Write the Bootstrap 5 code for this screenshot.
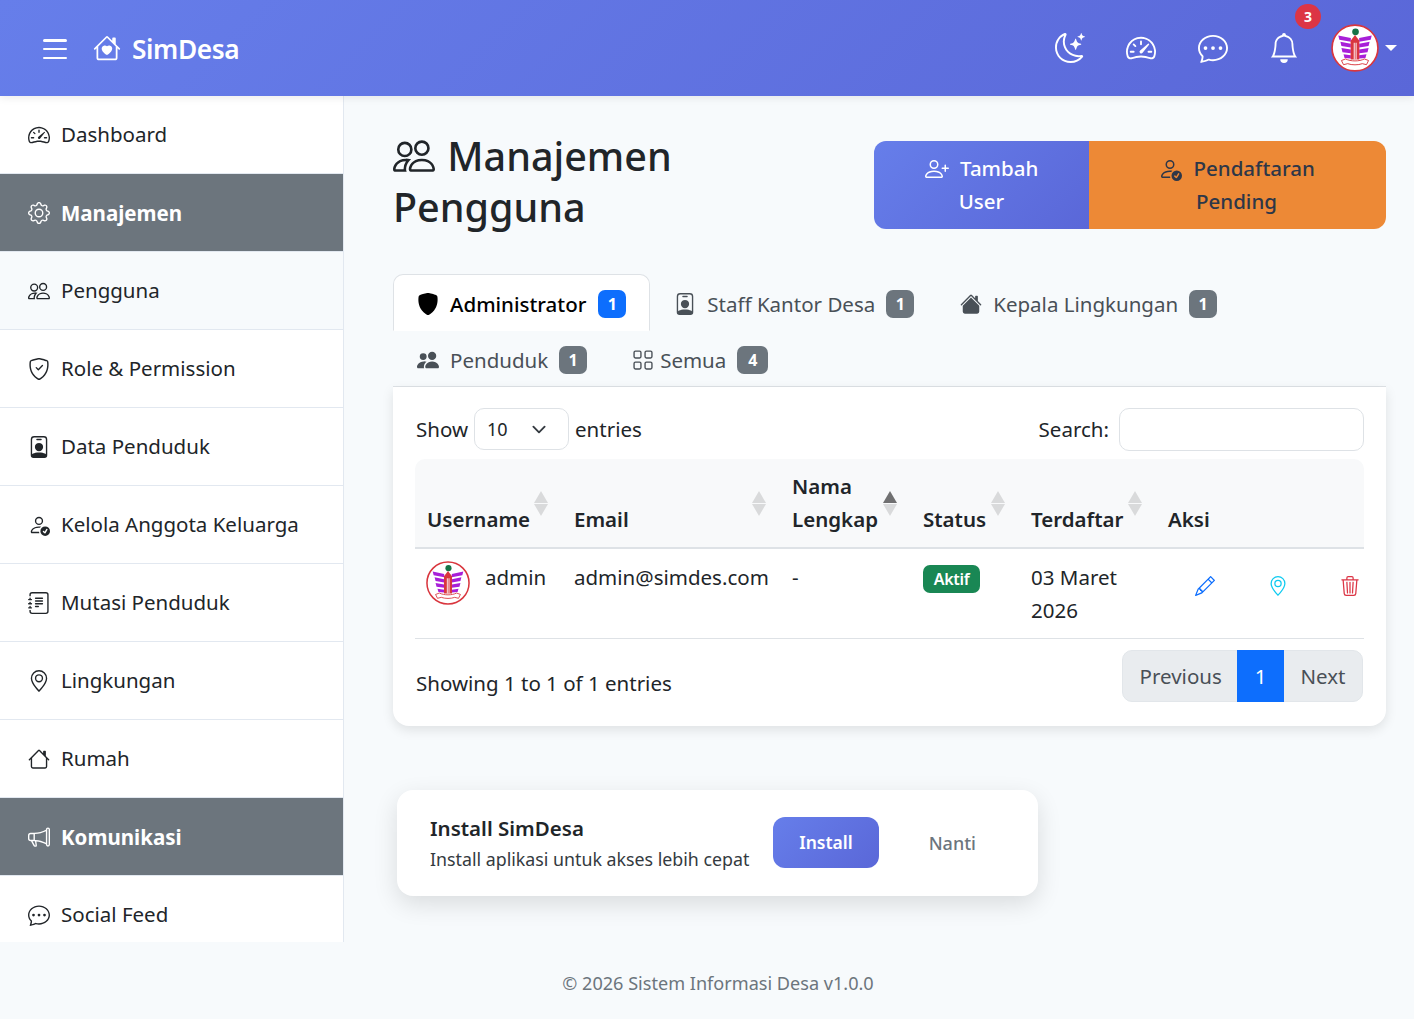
<!DOCTYPE html>
<html lang="id">
<head>
    <meta charset="utf-8">
    <meta name="viewport" content="width=device-width, initial-scale=1">
    <title>Manajemen Pengguna - SimDesa</title>
    <link href="https://cdn.jsdelivr.net/npm/bootstrap@5.3.0/dist/css/bootstrap.min.css" rel="stylesheet">
    <style>
        html, body { height: 1019px; overflow: hidden; }
        body {
            font-family: "Noto Sans", "Liberation Sans", sans-serif;
            font-size: 20.5px;
            line-height: 33px;
            background-color: #f7fafc;
            color: #212529;
        }
        .ico { width: 1em; height: 1em; fill: currentColor; flex-shrink: 0; }

        /* top bar */
        .top-bar {
            position: relative;
            z-index: 2;
            height: 96px;
            padding: 0 17px 0 43px;
            background: linear-gradient(135deg, #667eea 0%, #5a67d8 100%);
            box-shadow: 0 2px 8px rgba(0, 0, 0, .08);
            color: #fff;
        }
        .menu-btn { width: 24px; height: 20px; margin: 2px 27px 0 0; }
        .menu-btn span { display: block; height: 2.5px; background: #fff; border-radius: 2px; }
        .brand-name { font-size: 26.3px; font-weight: 600; letter-spacing: -.4px; color: #fff; text-decoration: none; padding-top: 2px; }
        .brand-name .ico { font-size: 28px; margin: -3px 11px 0 -1px; }
        .top-icons { gap: 41.5px; font-size: 30px; }
        .top-icons a { color: #fff; line-height: 0; }
        .notif-dot {
            top: -29px; left: 26px;
            width: 26px; height: 25px;
            font-size: 14px; font-weight: 700; line-height: 25px;
            text-align: center;
            background: #dc3545;
            border-radius: 13px;
        }
        .top-icons .avatar-link { margin-left: -9.5px; }
        .avatar-top { width: 48px; height: 48px; }
        .avatar-caret { width: 0; height: 0; margin-left: 6px; border: 6px solid transparent; border-top-color: #fff; border-bottom-width: 0; }

        /* side menu */
        .page-row { height: 846px; }
        .side-menu {
            width: 344px;
            flex-shrink: 0;
            height: 846px;
            overflow: hidden;
            background: #fff;
            border-right: 1px solid #e2e8f0;
        }
        .side-link {
            height: 78px;
            gap: 11px;
            padding: 0 0 0 28px;
            color: #212529;
            text-decoration: none;
            border-bottom: 1px solid #e2e8f0;
        }
        .side-link .ico { font-size: 22px; }
        .side-link.is-current { background: #f7fafc; }
        .side-head { background: #6c757d; color: #fff; font-weight: 700; padding-top: 1px; }

        /* main */
        .main-area { flex: 1; min-width: 0; padding: 35px 28px 0 49px; }
        .title-row { height: 102px; margin-bottom: 41px; }
        .page-title { width: 460px; font-size: 39.5px; line-height: 51px; font-weight: 500; margin: 0; }
        .page-title .ico { font-size: 42px; vertical-align: -6px; margin-right: 2px; }
        .action-group { margin-top: 10px; }
        .action-btn {
            padding: 11px 0;
            font-size: 20.5px;
            line-height: 33px;
            font-weight: 500;
            text-align: center;
            border: 0;
        }
        .action-btn .ico { font-size: 24px; vertical-align: -5px; margin-right: 6px; }
        .btn-add { width: 215px; color: #fff; background: linear-gradient(135deg, #667eea 0%, #5a67d8 100%); border-radius: 12px 0 0 12px; }
        .btn-pending { width: 297px; padding-right: 2px; color: #2d3748; background: #ed8936; border-radius: 0 12px 12px 0; }

        .user-tabs { border-bottom: 1px solid #dee2e6; }
        .user-tabs .nav-link {
            display: flex;
            align-items: center;
            height: 57px;
            padding: 3px 23px 0;
            color: #495057;
            border-radius: 10px 10px 0 0;
        }
        .user-tabs .nav-link.active { color: #000; font-weight: 500; background: #fff; border-color: #dee2e6 #dee2e6 #fff; }
        .user-tabs .nav-link.tab-snug { padding-right: 21px; }
        .user-tabs .ico { font-size: 22px; margin-right: 11px; }
        .user-tabs .ico.tight { margin: 0 6px 0 -3px; }
        .count-pill { margin-left: 11px; padding: 0; min-width: 28px; height: 28px; line-height: 29px; font-size: 16px; border-radius: 7px; }
        .nav-link.active .count-pill { margin-left: 12px; }
        .count-wide { min-width: 31px; }

        .table-panel {
            height: 339px;
            padding: 21px 22px;
            background: #fff;
            border-radius: 0 0 16px 16px;
            box-shadow: 0 4px 12px rgba(0, 0, 0, .1);
        }
        .entries-select { width: 95px; height: 42px; padding: 0 12px; margin: 0 6px; font-size: 18px; border-color: #dee2e6; border-radius: 10px; color: #212529; background-size: 20px 15px; background-position: right 19px center; }
        .search-box { width: 245px; height: 43px; margin-left: 10px; border-color: #dee2e6; border-radius: 10px; }
        .top-tools { margin-bottom: 9px; height: 42px; padding-left: 1px; }

        .user-table { table-layout: fixed; margin: 0; width: 949px; }
        .user-table th {
            position: relative;
            padding: 11px 10px 11px 12px;
            vertical-align: bottom;
            font-weight: 600;
            background: #f8f9fa;
            border-bottom: 2px solid #dee2e6;
        }
        .user-table th:first-child { border-top-left-radius: 10px; }
        .user-table th:last-child { border-top-right-radius: 10px; }
        .user-table td { padding: 12px 10px 10px 12px; height: 90px; vertical-align: top; border-bottom: 1px solid #dee2e6; }
        .w-user { width: 147px; }
        .w-mail { width: 218px; }
        .w-name { width: 131px; }
        .w-stat { width: 108px; }
        .w-date { width: 137px; }
        .w-acts { width: 208px; }
        .sort-up, .sort-down { position: absolute; right: 14px; width: 0; height: 0; border: 7px solid transparent; }
        .sort-up { top: 32px; border-top-width: 0; border-bottom: 12px solid #000; opacity: .12; }
        .sort-down { top: 45px; border-bottom-width: 0; border-top: 12px solid #000; opacity: .12; }
        .sort-up.on { opacity: .55; }
        .user-ava { width: 44px; height: 44px; margin: 0 15px 0 -1px; }
        .status-pill { padding: 0; width: 57px; height: 28px; line-height: 28px; font-size: 16px; font-weight: 600; letter-spacing: -.3px; border-radius: 7px; }
        .act-icons { gap: 52.5px; padding: 6px 0 0 27px; font-size: 20px; }

        .foot-tools { margin-top: 11px; padding-left: 1px; }
        .foot-tools .pagination { margin: 0 1px 0 0; }
        .foot-tools .page-link { height: 52px; padding: 9px 16.5px; line-height: 33px; font-size: 20.5px; color: #495057; background: #e9ecef; border-color: #e2e6ea; }
        .foot-tools .page-item.active .page-link { color: #fff; background: #0d6efd; border-color: #0d6efd; }
        .foot-tools .page-item:first-child .page-link { padding: 9px 15.5px 9px 17px; border-radius: 10px 0 0 10px; }
        .foot-tools .page-item:last-child .page-link { border-radius: 0 10px 10px 0; }
        .entries-note { padding-bottom: 2px; }

        .install-card {
            width: 641px;
            height: 106px;
            margin: 64px 0 0 4px;
            padding: 0 33px;
            background: #fff;
            border-radius: 16px;
            box-shadow: 0 8px 24px rgba(0, 0, 0, .12);
        }
        .install-copy { padding-top: 4px; }
        .install-title { font-size: 20.5px; line-height: 29px; font-weight: 600; }
        .install-text { font-size: 17.8px; line-height: 33px; color: #343a40; }
        .install-btn { width: 107px; height: 51px; margin: -2px 0 0 24px; padding: 0; color: #fff; font-size: 17.5px; font-weight: 600; background: linear-gradient(135deg, #667eea 0%, #5a67d8 100%); border: 0; border-radius: 12px; }
        .later-btn { width: 107px; margin-left: 21px; padding: 0; color: #6c757d; font-size: 18px; font-weight: 500; border: 0; }

        .page-foot { height: 77px; padding: 25px 0 0 22px; font-size: 18.1px; color: #6c757d; text-align: center; }
    </style>
</head>
<body>

<!-- bootstrap icon shapes used on the page -->
<svg width="0" height="0" class="position-absolute">
    <symbol id="i-house-heart" viewBox="0 0 16 16"><path d="M8 6.982C9.664 5.309 13.825 8.236 8 12 2.175 8.236 6.336 5.31 8 6.982Z"/><path d="M8.707 1.5a1 1 0 0 0-1.414 0L.646 8.146a.5.5 0 0 0 .708.708L2 8.207V13.5A1.5 1.5 0 0 0 3.5 15h9a1.5 1.5 0 0 0 1.5-1.5V8.207l.646.647a.5.5 0 0 0 .708-.708L13 5.793V2.5a.5.5 0 0 0-.5-.5h-1a.5.5 0 0 0-.5.5v1.293L8.707 1.5ZM13 7.207V13.5a.5.5 0 0 1-.5.5h-9a.5.5 0 0 1-.5-.5V7.207l5-5 5 5Z"/></symbol>
    <symbol id="i-moon" viewBox="0 0 16 16"><path d="M6 .278a.768.768 0 0 1 .08.858 7.208 7.208 0 0 0-.878 3.46c0 4.021 3.278 7.277 7.318 7.277.527 0 1.04-.055 1.533-.16a.787.787 0 0 1 .81.316.733.733 0 0 1-.031.893A8.349 8.349 0 0 1 8.344 16C3.734 16 0 12.286 0 7.71 0 4.266 2.114 1.312 5.124.06A.752.752 0 0 1 6 .278zM4.858 1.311A7.269 7.269 0 0 0 1.025 7.71c0 4.02 3.279 7.276 7.319 7.276a7.316 7.316 0 0 0 5.205-2.162c-.337.042-.68.063-1.029.063-4.61 0-8.343-3.714-8.343-8.29 0-1.167.242-2.278.681-3.286z"/><path d="M10.794 3.148a.217.217 0 0 1 .412 0l.387 1.162c.173.518.579.924 1.097 1.097l1.162.387a.217.217 0 0 1 0 .412l-1.162.387a1.734 1.734 0 0 0-1.097 1.097l-.387 1.162a.217.217 0 0 1-.412 0l-.387-1.162A1.734 1.734 0 0 0 9.31 6.593l-1.162-.387a.217.217 0 0 1 0-.412l1.162-.387a1.734 1.734 0 0 0 1.097-1.097l.387-1.162zM13.863.099a.145.145 0 0 1 .274 0l.258.774c.115.346.386.617.732.732l.774.258a.145.145 0 0 1 0 .274l-.774.258a1.156 1.156 0 0 0-.732.732l-.258.774a.145.145 0 0 1-.274 0l-.258-.774a1.156 1.156 0 0 0-.732-.732l-.774-.258a.145.145 0 0 1 0-.274l.774-.258c.346-.115.617-.386.732-.732L13.863.1z"/></symbol>
    <symbol id="i-speed" viewBox="0 0 16 16"><path d="M8 4a.5.5 0 0 1 .5.5V6a.5.5 0 0 1-1 0V4.5A.5.5 0 0 1 8 4zM3.732 5.732a.5.5 0 0 1 .707 0l.915.914a.5.5 0 1 1-.708.708l-.914-.915a.5.5 0 0 1 0-.707zM2 10a.5.5 0 0 1 .5-.5h1.586a.5.5 0 0 1 0 1H2.5A.5.5 0 0 1 2 10zm9.5 0a.5.5 0 0 1 .5-.5h1.5a.5.5 0 0 1 0 1H12a.5.5 0 0 1-.5-.5zm.754-4.246a.389.389 0 0 0-.527-.02L7.547 9.31a.91.91 0 1 0 1.302 1.258l3.434-4.297a.389.389 0 0 0-.029-.518z"/><path fill-rule="evenodd" d="M0 10a8 8 0 1 1 15.547 2.661c-.442 1.253-1.845 1.602-2.932 1.25C11.309 13.488 9.475 13 8 13c-1.474 0-3.31.488-4.615.911-1.087.352-2.49.003-2.932-1.25A7.988 7.988 0 0 1 0 10zm8-7a7 7 0 0 0-6.603 9.329c.203.575.923.876 1.68.63C4.397 12.533 6.358 12 8 12s3.604.532 4.923.96c.757.245 1.477-.056 1.68-.631A7 7 0 0 0 8 3z"/></symbol>
    <symbol id="i-chat" viewBox="0 0 16 16"><path d="M5 8a1 1 0 1 1-2 0 1 1 0 0 1 2 0zm4 0a1 1 0 1 1-2 0 1 1 0 0 1 2 0zm3 1a1 1 0 1 0 0-2 1 1 0 0 0 0 2z"/><path d="m2.165 15.803.02-.004c1.83-.363 2.948-.842 3.468-1.105A9.06 9.06 0 0 0 8 15c4.418 0 8-3.134 8-7s-3.582-7-8-7-8 3.134-8 7c0 1.76.743 3.37 1.97 4.6a10.437 10.437 0 0 1-.524 2.318l-.003.011a10.722 10.722 0 0 1-.244.637c-.079.186.074.394.273.362a21.673 21.673 0 0 0 .693-.125zm.8-3.108a1 1 0 0 0-.287-.801C1.618 10.83 1 9.468 1 8c0-3.192 3.004-6 7-6s7 2.808 7 6c0 3.193-3.004 6-7 6a8.06 8.06 0 0 1-2.088-.272 1 1 0 0 0-.711.074c-.387.196-1.24.57-2.634.893a10.97 10.97 0 0 0 .398-2z"/></symbol>
    <symbol id="i-bell" viewBox="0 0 16 16"><path d="M8 16a2 2 0 0 0 2-2H6a2 2 0 0 0 2 2zM8 1.918l-.797.161A4.002 4.002 0 0 0 4 6c0 .628-.134 2.197-.459 3.742-.16.767-.376 1.566-.663 2.258h10.244c-.287-.692-.502-1.49-.663-2.258C12.134 8.197 12 6.628 12 6a4.002 4.002 0 0 0-3.203-3.92L8 1.917zM14.22 12c.223.447.481.801.78 1H1c.299-.199.557-.553.78-1C2.68 10.2 3 6.88 3 6c0-2.42 1.72-4.44 4.005-4.901a1 1 0 1 1 1.99 0A5.002 5.002 0 0 1 13 6c0 .88.32 4.2 1.22 6z"/></symbol>
    <symbol id="i-gear" viewBox="0 0 16 16"><path d="M8 4.754a3.246 3.246 0 1 0 0 6.492 3.246 3.246 0 0 0 0-6.492zM5.754 8a2.246 2.246 0 1 1 4.492 0 2.246 2.246 0 0 1-4.492 0z"/><path d="M9.796 1.343c-.527-1.79-3.065-1.79-3.592 0l-.094.319a.873.873 0 0 1-1.255.52l-.292-.16c-1.64-.892-3.433.902-2.54 2.541l.159.292a.873.873 0 0 1-.52 1.255l-.319.094c-1.79.527-1.79 3.065 0 3.592l.319.094a.873.873 0 0 1 .52 1.255l-.16.292c-.892 1.64.901 3.434 2.541 2.54l.292-.159a.873.873 0 0 1 1.255.52l.094.319c.527 1.79 3.065 1.79 3.592 0l.094-.319a.873.873 0 0 1 1.255-.52l.292.16c1.64.893 3.434-.902 2.54-2.541l-.159-.292a.873.873 0 0 1 .52-1.255l.319-.094c1.79-.527 1.79-3.065 0-3.592l-.319-.094a.873.873 0 0 1-.52-1.255l.16-.292c.893-1.64-.902-3.433-2.541-2.54l-.292.159a.873.873 0 0 1-1.255-.52l-.094-.319zm-2.633.283c.246-.835 1.428-.835 1.674 0l.094.319a1.873 1.873 0 0 0 2.693 1.115l.291-.16c.764-.415 1.6.42 1.184 1.185l-.159.292a1.873 1.873 0 0 0 1.116 2.692l.318.094c.835.246.835 1.428 0 1.674l-.319.094a1.873 1.873 0 0 0-1.115 2.693l.16.291c.415.764-.42 1.6-1.185 1.184l-.291-.159a1.873 1.873 0 0 0-2.693 1.116l-.094.318c-.246.835-1.428.835-1.674 0l-.094-.319a1.873 1.873 0 0 0-2.692-1.115l-.292.16c-.764.415-1.6-.42-1.184-1.185l.159-.291A1.873 1.873 0 0 0 1.945 8.93l-.319-.094c-.835-.246-.835-1.428 0-1.674l.319-.094A1.873 1.873 0 0 0 3.06 4.377l-.16-.292c-.415-.764.42-1.6 1.185-1.184l.292.159a1.873 1.873 0 0 0 2.692-1.115l.094-.319z"/></symbol>
    <symbol id="i-people" viewBox="0 0 16 16"><path d="M15 14s1 0 1-1-1-4-5-4-5 3-5 4 1 1 1 1h8Zm-7.978-1A.261.261 0 0 1 7 12.996c.001-.264.167-1.03.76-1.72C8.312 10.629 9.282 10 11 10c1.717 0 2.687.63 3.24 1.276.593.69.758 1.457.76 1.72l-.008.002a.274.274 0 0 1-.014.002H7.022ZM11 7a2 2 0 1 0 0-4 2 2 0 0 0 0 4Zm3-2a3 3 0 1 1-6 0 3 3 0 0 1 6 0ZM6.936 9.28a5.88 5.88 0 0 0-1.23-.247A7.35 7.35 0 0 0 5 9c-4 0-5 3-5 4 0 .667.333 1 1 1h4.216A2.238 2.238 0 0 1 5 13c0-1.01.377-2.042 1.09-2.904.243-.294.526-.569.846-.816ZM4.92 10A5.493 5.493 0 0 0 4 13H1c0-.26.164-1.03.76-1.724.545-.636 1.492-1.256 3.16-1.275ZM1.5 5.5a3 3 0 1 1 6 0 3 3 0 0 1-6 0Zm3-2a2 2 0 1 0 0 4 2 2 0 0 0 0-4Z"/></symbol>
    <symbol id="i-shield-check" viewBox="0 0 16 16"><path d="M5.338 1.59a61.44 61.44 0 0 0-2.837.856.481.481 0 0 0-.328.39c-.554 4.157.726 7.19 2.253 9.188a10.725 10.725 0 0 0 2.287 2.233c.346.244.652.42.893.533.12.057.218.095.293.118a.55.55 0 0 0 .101.025.615.615 0 0 0 .1-.025c.076-.023.174-.061.294-.118.24-.113.547-.29.893-.533a10.726 10.726 0 0 0 2.287-2.233c1.527-1.997 2.807-5.031 2.253-9.188a.48.48 0 0 0-.328-.39c-.651-.213-1.75-.56-2.837-.855C9.552 1.29 8.531 1.067 8 1.067c-.53 0-1.552.223-2.662.524zM5.072.56C6.157.265 7.31 0 8 0s1.843.265 2.928.56c1.11.3 2.229.655 2.887.87a1.54 1.54 0 0 1 1.044 1.262c.596 4.477-.787 7.795-2.465 9.99a11.775 11.775 0 0 1-2.517 2.453 7.159 7.159 0 0 1-1.048.625c-.28.132-.581.24-.829.24s-.548-.108-.829-.24a7.158 7.158 0 0 1-1.048-.625 11.777 11.777 0 0 1-2.517-2.453C1.928 10.487.545 7.169 1.141 2.692A1.54 1.54 0 0 1 2.185 1.43 62.456 62.456 0 0 1 5.072.56z"/><path d="M10.854 5.146a.5.5 0 0 1 0 .708l-3 3a.5.5 0 0 1-.708 0l-1.5-1.5a.5.5 0 1 1 .708-.708L7.5 7.793l2.646-2.647a.5.5 0 0 1 .708 0z"/></symbol>
    <symbol id="i-badge" viewBox="0 0 16 16"><path d="M6.5 2a.5.5 0 0 0 0 1h3a.5.5 0 0 0 0-1h-3zM11 8a3 3 0 1 1-6 0 3 3 0 0 1 6 0z"/><path d="M4.5 0A2.5 2.5 0 0 0 2 2.5V14a2 2 0 0 0 2 2h8a2 2 0 0 0 2-2V2.5A2.5 2.5 0 0 0 11.5 0h-7zM3 2.5A1.5 1.5 0 0 1 4.5 1h7A1.5 1.5 0 0 1 13 2.5v10.795a4.2 4.2 0 0 0-.776-.492C11.392 12.387 10.063 12 8 12s-3.392.387-4.224.803a4.2 4.2 0 0 0-.776.492V2.5z"/></symbol>
    <symbol id="i-person-check" viewBox="0 0 16 16"><path d="M12.5 16a3.5 3.5 0 1 0 0-7 3.5 3.5 0 0 0 0 7Zm1.679-4.493-1.335 2.226a.75.75 0 0 1-1.174.144l-.774-.773a.5.5 0 0 1 .708-.708l.547.548 1.17-1.951a.5.5 0 1 1 .858.514ZM11 5a3 3 0 1 1-6 0 3 3 0 0 1 6 0ZM8 7a2 2 0 1 0 0-4 2 2 0 0 0 0 4Z"/><path d="M8.256 14a4.474 4.474 0 0 1-.229-1.004H3c.001-.246.154-.986.832-1.664C4.484 10.68 5.711 10 8 10c.26 0 .507.009.74.025.226-.341.496-.65.804-.918C9.077 9.038 8.564 9 8 9c-5 0-6 3-6 4s1 1 1 1h5.256Z"/></symbol>
    <symbol id="i-journal" viewBox="0 0 16 16"><path d="M5 10.5a.5.5 0 0 1 .5-.5h2a.5.5 0 0 1 0 1h-2a.5.5 0 0 1-.5-.5zm0-2a.5.5 0 0 1 .5-.5h5a.5.5 0 0 1 0 1h-5a.5.5 0 0 1-.5-.5zm0-2a.5.5 0 0 1 .5-.5h5a.5.5 0 0 1 0 1h-5a.5.5 0 0 1-.5-.5zm0-2a.5.5 0 0 1 .5-.5h5a.5.5 0 0 1 0 1h-5a.5.5 0 0 1-.5-.5z"/><path d="M3 0h10a2 2 0 0 1 2 2v12a2 2 0 0 1-2 2H3a2 2 0 0 1-2-2v-1h1v1a1 1 0 0 0 1 1h10a1 1 0 0 0 1-1V2a1 1 0 0 0-1-1H3a1 1 0 0 0-1 1v1H1V2a2 2 0 0 1 2-2z"/><path d="M1 5v-.5a.5.5 0 0 1 1 0V5h.5a.5.5 0 0 1 0 1h-2a.5.5 0 0 1 0-1H1zm0 3v-.5a.5.5 0 0 1 1 0V8h.5a.5.5 0 0 1 0 1h-2a.5.5 0 0 1 0-1H1zm0 3v-.5a.5.5 0 0 1 1 0v.5h.5a.5.5 0 0 1 0 1h-2a.5.5 0 0 1 0-1H1z"/></symbol>
    <symbol id="i-geo" viewBox="0 0 16 16"><path d="M12.166 8.94c-.524 1.062-1.234 2.12-1.96 3.07A31.493 31.493 0 0 1 8 14.58a31.481 31.481 0 0 1-2.206-2.57c-.726-.95-1.436-2.008-1.96-3.07C3.304 7.867 3 6.862 3 6a5 5 0 0 1 10 0c0 .862-.305 1.867-.834 2.94zM8 16s6-5.686 6-10A6 6 0 0 0 2 6c0 4.314 6 10 6 10z"/><path d="M8 8a2 2 0 1 1 0-4 2 2 0 0 1 0 4zm0 1a3 3 0 1 0 0-6 3 3 0 0 0 0 6z"/></symbol>
    <symbol id="i-house" viewBox="0 0 16 16"><path d="M8.707 1.5a1 1 0 0 0-1.414 0L.646 8.146a.5.5 0 0 0 .708.708L2 8.207V13.5A1.5 1.5 0 0 0 3.5 15h9a1.5 1.5 0 0 0 1.5-1.5V8.207l.646.647a.5.5 0 0 0 .708-.708L13 5.793V2.5a.5.5 0 0 0-.5-.5h-1a.5.5 0 0 0-.5.5v1.293L8.707 1.5ZM13 7.207V13.5a.5.5 0 0 1-.5.5h-9a.5.5 0 0 1-.5-.5V7.207l5-5 5 5Z"/></symbol>
    <symbol id="i-megaphone" viewBox="0 0 16 16"><path d="M13 2.5a1.5 1.5 0 0 1 3 0v11a1.5 1.5 0 0 1-3 0v-.214c-2.162-1.241-4.49-1.843-6.912-2.083l.405 2.712A1 1 0 0 1 5.51 15.1h-.548a1 1 0 0 1-.916-.599l-1.85-3.49a68.14 68.14 0 0 0-.202-.003A2.014 2.014 0 0 1 0 9V7a2.02 2.02 0 0 1 1.992-2.013 74.663 74.663 0 0 0 2.483-.075c3.043-.154 6.148-.849 8.525-2.199V2.5zm1 0v11a.5.5 0 0 0 1 0v-11a.5.5 0 0 0-1 0zm-1 1.35c-2.344 1.205-5.209 1.842-8 2.033v4.233c.18.01.359.022.537.036 2.568.189 5.093.744 7.463 1.993V3.85zm-9 6.215v-4.13a95.09 95.09 0 0 1-1.992.052A1.02 1.02 0 0 0 1 7v2c0 .55.448 1.002 1.006 1.009A60.49 60.49 0 0 1 4 10.065zm-.657.975 1.609 3.037.01.024h.548l-.002-.014-.443-2.966a68.019 68.019 0 0 0-1.722-.082z"/></symbol>
    <symbol id="i-person-plus" viewBox="0 0 16 16"><path d="M6 8a3 3 0 1 0 0-6 3 3 0 0 0 0 6zm2-3a2 2 0 1 1-4 0 2 2 0 0 1 4 0zm4 8c0 1-1 1-1 1H1s-1 0-1-1 1-4 6-4 6 3 6 4zm-1-.004c-.001-.246-.154-.986-.832-1.664C9.516 10.68 8.289 10 6 10c-2.29 0-3.516.68-4.168 1.332-.678.678-.83 1.418-.832 1.664h10z"/><path d="M13.5 5a.5.5 0 0 1 .5.5V7h1.5a.5.5 0 0 1 0 1H14v1.5a.5.5 0 0 1-1 0V8h-1.5a.5.5 0 0 1 0-1H13V5.5a.5.5 0 0 1 .5-.5z"/></symbol>
    <symbol id="i-shield-fill" viewBox="0 0 16 16"><path d="M5.072.56C6.157.265 7.31 0 8 0s1.843.265 2.928.56c1.11.3 2.229.655 2.887.87a1.54 1.54 0 0 1 1.044 1.262c.596 4.477-.787 7.795-2.465 9.99a11.775 11.775 0 0 1-2.517 2.453 7.159 7.159 0 0 1-1.048.625c-.28.132-.581.24-.829.24s-.548-.108-.829-.24a7.158 7.158 0 0 1-1.048-.625 11.777 11.777 0 0 1-2.517-2.453C1.928 10.487.545 7.169 1.141 2.692A1.54 1.54 0 0 1 2.185 1.43 62.456 62.456 0 0 1 5.072.56z"/></symbol>
    <symbol id="i-house-fill" viewBox="0 0 16 16"><path d="M8.707 1.5a1 1 0 0 0-1.414 0L.646 8.146a.5.5 0 0 0 .708.708L8 2.207l6.646 6.647a.5.5 0 0 0 .708-.708L13 5.793V2.5a.5.5 0 0 0-.5-.5h-1a.5.5 0 0 0-.5.5v1.293L8.707 1.5Z"/><path d="m8 3.293 6 6V13.5a1.5 1.5 0 0 1-1.5 1.5h-9A1.5 1.5 0 0 1 2 13.5V9.293l6-6Z"/></symbol>
    <symbol id="i-people-fill" viewBox="0 0 16 16"><path d="M7 14s-1 0-1-1 1-4 5-4 5 3 5 4-1 1-1 1H7Zm4-6a3 3 0 1 0 0-6 3 3 0 0 0 0 6Zm-5.784 6A2.238 2.238 0 0 1 5 13c0-1.355.68-2.75 1.936-3.72A6.325 6.325 0 0 0 5 9c-4 0-5 3-5 4s1 1 1 1h4.216ZM4.5 8a2.5 2.5 0 1 0 0-5 2.5 2.5 0 0 0 0 5Z"/></symbol>
    <symbol id="i-grid" viewBox="0 0 16 16"><path d="M1 2.5A1.5 1.5 0 0 1 2.5 1h3A1.5 1.5 0 0 1 7 2.5v3A1.5 1.5 0 0 1 5.5 7h-3A1.5 1.5 0 0 1 1 5.5v-3zM2.5 2a.5.5 0 0 0-.5.5v3a.5.5 0 0 0 .5.5h3a.5.5 0 0 0 .5-.5v-3a.5.5 0 0 0-.5-.5h-3zm6.5.5A1.5 1.5 0 0 1 10.5 1h3A1.5 1.5 0 0 1 15 2.5v3A1.5 1.5 0 0 1 13.5 7h-3A1.5 1.5 0 0 1 9 5.5v-3zm1.5-.5a.5.5 0 0 0-.5.5v3a.5.5 0 0 0 .5.5h3a.5.5 0 0 0 .5-.5v-3a.5.5 0 0 0-.5-.5h-3zM1 10.5A1.5 1.5 0 0 1 2.5 9h3A1.5 1.5 0 0 1 7 10.5v3A1.5 1.5 0 0 1 5.5 15h-3A1.5 1.5 0 0 1 1 13.5v-3zm1.5-.5a.5.5 0 0 0-.5.5v3a.5.5 0 0 0 .5.5h3a.5.5 0 0 0 .5-.5v-3a.5.5 0 0 0-.5-.5h-3zm6.5.5A1.5 1.5 0 0 1 10.5 9h3a1.5 1.5 0 0 1 1.5 1.5v3a1.5 1.5 0 0 1-1.5 1.5h-3A1.5 1.5 0 0 1 9 13.5v-3zm1.5-.5a.5.5 0 0 0-.5.5v3a.5.5 0 0 0 .5.5h3a.5.5 0 0 0 .5-.5v-3a.5.5 0 0 0-.5-.5h-3z"/></symbol>
    <symbol id="i-pencil" viewBox="0 0 16 16"><path d="M12.146.146a.5.5 0 0 1 .708 0l3 3a.5.5 0 0 1 0 .708l-10 10a.5.5 0 0 1-.168.11l-5 2a.5.5 0 0 1-.65-.65l2-5a.5.5 0 0 1 .11-.168l10-10zM11.207 2.5 13.5 4.793 14.793 3.5 12.5 1.207 11.207 2.5zm1.586 3L10.5 3.207 4 9.707V10h.5a.5.5 0 0 1 .5.5v.5h.5a.5.5 0 0 1 .5.5v.5h.293l6.5-6.5zm-9.761 5.175-.106.106-1.528 3.821 3.821-1.528.106-.106A.5.5 0 0 1 5 12.5V12h-.5a.5.5 0 0 1-.5-.5V11h-.5a.5.5 0 0 1-.468-.325z"/></symbol>
    <symbol id="i-trash" viewBox="0 0 16 16"><path d="M6.5 1h3a.5.5 0 0 1 .5.5v1H6v-1a.5.5 0 0 1 .5-.5ZM11 2.5v-1A1.5 1.5 0 0 0 9.5 0h-3A1.5 1.5 0 0 0 5 1.5v1H2.506a.58.58 0 0 0-.01 0H1.500a.5.5 0 0 0 0 1h.538l.853 10.66A2 2 0 0 0 4.885 16h6.230a2 2 0 0 0 1.994-1.84l.853-10.66h.538a.5.5 0 0 0 0-1h-.995a.59.59 0 0 0-.01 0H11Zm1.958 1-.846 10.58a1 1 0 0 1-.997.92h-6.230a1 1 0 0 1-.997-.92L3.042 3.5h9.916Zm-7.487 1a.5.5 0 0 1 .528.47l.5 8.5a.5.5 0 0 1-.998.06L5 5.03a.5.5 0 0 1 .47-.53Zm5.058 0a.5.5 0 0 1 .47.53l-.5 8.5a.5.5 0 1 1-.998-.06l.5-8.5a.5.5 0 0 1 .528-.47ZM8 4.5a.5.5 0 0 1 .5.5v8.5a.5.5 0 0 1-1 0V5a.5.5 0 0 1 .5-.5Z"/></symbol>
    <symbol id="i-logo" viewBox="0 0 46 46">
        <circle cx="23" cy="23" r="22" fill="#fff" stroke="#d9363e" stroke-width="1.6"/>
        <circle cx="23.5" cy="7.5" r="3.2" fill="#157347"/>
        <path fill="#a81fd8" d="M7 11l12 2.500v3.500L8 15zM39 11l-12 2.500v3.500l11-2zM9 17l10 2v3.500l-9-1.500zM37 17l-10 2v3.500l9-1.500zM10 23l9 1.500V28l-8-1zM36 23l-9 1.500V28l8-1zM12 29l7 1v3l-6-.5zM34 29l-7 1v3l6-.5z"/>
        <path fill="#d9363e" d="M23 10.500l4.200 5.500V34h-8.400V16z"/>
        <path fill="#fff" d="M21.800 18h.9v16h-.9zM23.600 18h.9v16h-.9z"/>
        <path fill="#fff" stroke="#d9363e" stroke-width=".9" d="M10 35l4-1.500c5 2.500 13 2.500 18 0l4 1.500-2 4-4-1c-4 1.500-10 1.500-14 0l-4 1z"/>
    </symbol>
</svg>

<header class="top-bar d-flex align-items-center justify-content-between">
    <div class="d-flex align-items-center">
        <div class="menu-btn d-flex flex-column justify-content-between"><span></span><span></span><span></span></div>
        <a href="#" class="brand-name d-flex align-items-center"><svg class="ico"><use href="#i-house-heart"/></svg>SimDesa</a>
    </div>
    <div class="top-icons d-flex align-items-center">
        <a href="#"><svg class="ico"><use href="#i-moon"/></svg></a>
        <a href="#"><svg class="ico"><use href="#i-speed"/></svg></a>
        <a href="#"><svg class="ico"><use href="#i-chat"/></svg></a>
        <a href="#" class="position-relative"><svg class="ico"><use href="#i-bell"/></svg><span class="notif-dot position-absolute text-white">3</span></a>
        <a href="#" class="avatar-link d-flex align-items-center"><svg class="avatar-top"><use href="#i-logo"/></svg><span class="avatar-caret"></span></a>
    </div>
</header>

<div class="page-row d-flex">
    <nav class="side-menu d-flex flex-column">
        <a href="#" class="side-link d-flex align-items-center flex-shrink-0"><svg class="ico"><use href="#i-speed"/></svg>Dashboard</a>
        <div class="side-link side-head d-flex align-items-center flex-shrink-0"><svg class="ico"><use href="#i-gear"/></svg>Manajemen</div>
        <a href="#" class="side-link is-current d-flex align-items-center flex-shrink-0"><svg class="ico"><use href="#i-people"/></svg>Pengguna</a>
        <a href="#" class="side-link d-flex align-items-center flex-shrink-0"><svg class="ico"><use href="#i-shield-check"/></svg>Role &amp; Permission</a>
        <a href="#" class="side-link d-flex align-items-center flex-shrink-0"><svg class="ico"><use href="#i-badge"/></svg>Data Penduduk</a>
        <a href="#" class="side-link d-flex align-items-center flex-shrink-0"><svg class="ico"><use href="#i-person-check"/></svg>Kelola Anggota Keluarga</a>
        <a href="#" class="side-link d-flex align-items-center flex-shrink-0"><svg class="ico"><use href="#i-journal"/></svg>Mutasi Penduduk</a>
        <a href="#" class="side-link d-flex align-items-center flex-shrink-0"><svg class="ico"><use href="#i-geo"/></svg>Lingkungan</a>
        <a href="#" class="side-link d-flex align-items-center flex-shrink-0"><svg class="ico"><use href="#i-house"/></svg>Rumah</a>
        <div class="side-link side-head d-flex align-items-center flex-shrink-0"><svg class="ico"><use href="#i-megaphone"/></svg>Komunikasi</div>
        <a href="#" class="side-link d-flex align-items-center flex-shrink-0"><svg class="ico"><use href="#i-chat"/></svg>Social Feed</a>
    </nav>

    <main class="main-area">
        <div class="title-row d-flex justify-content-between align-items-start">
            <h1 class="page-title"><svg class="ico"><use href="#i-people"/></svg> Manajemen Pengguna</h1>
            <div class="action-group d-flex">
                <a href="#" class="btn action-btn btn-add"><svg class="ico"><use href="#i-person-plus"/></svg> Tambah<br>User</a>
                <a href="#" class="btn action-btn btn-pending"><svg class="ico"><use href="#i-person-check"/></svg> Pendaftaran<br>Pending</a>
            </div>
        </div>

        <ul class="nav nav-tabs user-tabs">
            <li class="nav-item"><a class="nav-link active" href="#"><svg class="ico"><use href="#i-shield-fill"/></svg>Administrator<span class="badge count-pill text-bg-primary">1</span></a></li>
            <li class="nav-item"><a class="nav-link tab-snug" href="#"><svg class="ico"><use href="#i-badge"/></svg>Staff Kantor Desa<span class="badge count-pill text-bg-secondary">1</span></a></li>
            <li class="nav-item"><a class="nav-link" href="#"><svg class="ico"><use href="#i-house-fill"/></svg>Kepala Lingkungan<span class="badge count-pill text-bg-secondary">1</span></a></li>
            <li class="nav-item"><a class="nav-link" href="#"><svg class="ico"><use href="#i-people-fill"/></svg>Penduduk<span class="badge count-pill text-bg-secondary">1</span></a></li>
            <li class="nav-item"><a class="nav-link" href="#"><svg class="ico tight"><use href="#i-grid"/></svg>Semua<span class="badge count-pill count-wide text-bg-secondary">4</span></a></li>
        </ul>

        <section class="table-panel">
            <div class="top-tools d-flex justify-content-between align-items-center">
                <label class="d-flex align-items-center">Show <select class="form-select entries-select"><option>10</option></select> entries</label>
                <label class="d-flex align-items-center">Search: <input type="search" class="form-control search-box"></label>
            </div>
            <table class="table user-table">
                <thead>
                    <tr>
                        <th class="w-user">Username<i class="sort-up"></i><i class="sort-down"></i></th>
                        <th class="w-mail">Email<i class="sort-up"></i><i class="sort-down"></i></th>
                        <th class="w-name">Nama Lengkap<i class="sort-up on"></i><i class="sort-down"></i></th>
                        <th class="w-stat">Status<i class="sort-up"></i><i class="sort-down"></i></th>
                        <th class="w-date">Terdaftar<i class="sort-up"></i><i class="sort-down"></i></th>
                        <th class="w-acts">Aksi</th>
                    </tr>
                </thead>
                <tbody>
                    <tr>
                        <td class="text-nowrap"><div class="d-flex align-items-start"><svg class="user-ava flex-shrink-0"><use href="#i-logo"/></svg>admin</div></td>
                        <td class="text-nowrap">admin@simdes.com</td>
                        <td>-</td>
                        <td><span class="badge status-pill text-bg-success">Aktif</span></td>
                        <td>03 Maret 2026</td>
                        <td>
                            <div class="act-icons d-flex">
                                <a href="#" class="text-primary"><svg class="ico"><use href="#i-pencil"/></svg></a>
                                <a href="#" class="text-info"><svg class="ico"><use href="#i-geo"/></svg></a>
                                <a href="#" class="text-danger"><svg class="ico"><use href="#i-trash"/></svg></a>
                            </div>
                        </td>
                    </tr>
                </tbody>
            </table>
            <div class="foot-tools d-flex justify-content-between align-items-end">
                <div class="entries-note">Showing 1 to 1 of 1 entries</div>
                <ul class="pagination">
                    <li class="page-item disabled"><a class="page-link" href="#">Previous</a></li>
                    <li class="page-item active"><a class="page-link" href="#">1</a></li>
                    <li class="page-item disabled"><a class="page-link" href="#">Next</a></li>
                </ul>
            </div>
        </section>

        <div class="install-card d-flex align-items-center">
            <div class="install-copy">
                <div class="install-title">Install SimDesa</div>
                <div class="install-text text-nowrap">Install aplikasi untuk akses lebih cepat</div>
            </div>
            <button class="btn install-btn">Install</button>
            <button class="btn later-btn">Nanti</button>
        </div>
    </main>
</div>

<footer class="page-foot">© 2026 Sistem Informasi Desa v1.0.0</footer>

<script src="https://cdn.jsdelivr.net/npm/bootstrap@5.3.0/dist/js/bootstrap.bundle.min.js"></script>
</body>
</html>
